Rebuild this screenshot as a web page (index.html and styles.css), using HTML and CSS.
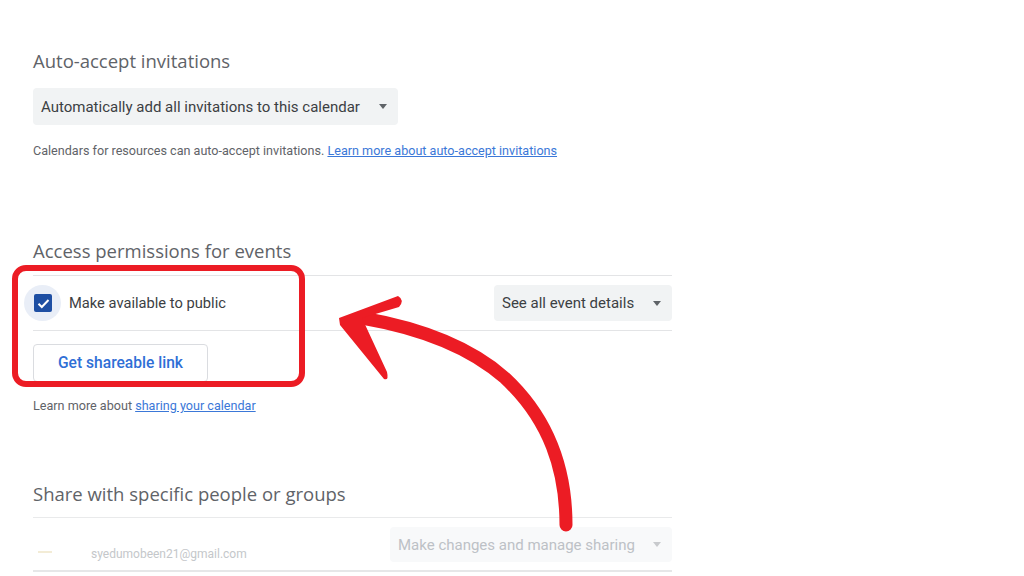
FILE: index.html
```html
<!DOCTYPE html>
<html lang="en">
<head>
    <meta name="viewport" content="width=device-width, initial-scale=1.0">
    <link rel="stylesheet" href="styles.css">
    <title>Calendar settings</title>
</head>

<body>
    <div id="page">

        <section class="block auto">
            <h2>Auto-accept invitations</h2>
            <div class="select wide">
                <span>Automatically add all invitations to this calendar</span>
                <span class="caret"></span>
            </div>
            <p class="help">Calendars for resources can auto-accept invitations. <a href="#">Learn more about auto-accept invitations</a></p>
        </section>

        <section class="block access">
            <h2>Access permissions for events</h2>
            <div class="row">
                <div class="check">
                    <span class="halo"></span>
                    <span class="box">
                        <svg width="13" height="11" viewBox="0 0 13 11"><path d="M1.5 5.8 L4.8 9 L11.5 2" fill="none" stroke="#fff" stroke-width="2"/></svg>
                    </span>
                </div>
                <span class="label">Make available to public</span>
                <div class="select small">
                    <span>See all event details</span>
                    <span class="caret"></span>
                </div>
            </div>
            <div class="btnrow">
                <button class="link-btn">Get shareable link</button>
            </div>
            <p class="help">Learn more about <a href="#">sharing your calendar</a></p>
        </section>

        <section class="block share">
            <h2>Share with specific people or groups</h2>
            <div class="row person">
                <span class="avatar"></span>
                <span class="email">syedumobeen21@gmail.com</span>
                <div class="select faded">
                    <span>Make changes and manage sharing</span>
                    <span class="caret"></span>
                </div>
            </div>
        </section>

        <!-- annotation drawn on top of the screenshot -->
        <svg class="annot" width="1024" height="576" viewBox="0 0 1024 576">
            <rect x="15" y="268" width="287" height="116" rx="11" fill="none" stroke="#ec1c24" stroke-width="6"/>
            <path d="M566 525 C 566 470, 550 420, 505 378 C 470 347, 420 328, 362 318" fill="none" stroke="#ec1c24" stroke-width="13" stroke-linecap="round"/>
            <path d="M339 318 L 398 296 Q 405 300 399 307 L 362 318 L 387 372 Q 389 381 384 379 L 340 325 Z" fill="#ec1c24"/>
        </svg>
    </div>
</body>
</html>
```

FILE: styles.css
```css
body {
    margin: 0px;
    background-color: white;
    font-family: Roboto, "Liberation Sans", sans-serif;
    color: #3c4043;
}

#page {
    position: relative;
    width: 1024px;
    height: 576px;
    overflow: hidden;
    padding: 0px 352px 0px 33px;
    box-sizing: border-box;
}

h2 {
    margin: 0px;
    font-family: "Open Sans", Roboto, sans-serif;
    font-weight: 400;
    font-size: 18.5px;
    line-height: 24px;
    color: #5f6368;
}

.block.auto {
    padding-top: 49px;
}

.block.auto h2 {
    margin-bottom: 15px;
}

.block.access {
    margin-top: 80px;
}

.block.access h2 {
    padding-bottom: 12px;
    border-bottom: 1px solid #e3e4e6;
}

.block.share {
    margin-top: 68px;
}

.block.share h2 {
    padding-bottom: 11px;
    border-bottom: 1px solid #e9eaeb;
}

.select {
    display: flex;
    align-items: center;
    justify-content: space-between;
    height: 37px;
    padding: 0px 11px 0px 8px;
    background-color: #f1f3f4;
    border-radius: 4px;
    font-size: 15px;
    color: #3c4043;
    box-sizing: border-box;
}

.select.wide {
    width: 365px;
}

.select.small {
    width: 178px;
    height: 36px;
    margin-left: auto;
}

.select.faded {
    width: 282px;
    height: 35px;
    margin-left: auto;
    background-color: #f8f9fa;
    color: #bdc1c6;
}

.caret {
    width: 0px;
    height: 0px;
    border-left: 4.5px solid transparent;
    border-right: 4.5px solid transparent;
    border-top: 5px solid #5f6368;
}

.select.faded .caret {
    border-top-color: #c8cacd;
}

.help {
    margin: 18px 0px 0px 0px;
    font-size: 12.6px;
    line-height: 16px;
    color: #5f6368;
}

.help a {
    color: #3b78d8;
}

.row {
    display: flex;
    align-items: center;
    height: 54px;
    border-bottom: 1px solid #e3e4e6;
}

.check {
    position: relative;
    width: 18px;
    height: 18px;
    margin-left: 1px;
}

.halo {
    position: absolute;
    left: -10px;
    top: -9px;
    width: 37px;
    height: 36px;
    border-radius: 50%;
    background-color: #e9eef7;
}

.box {
    position: absolute;
    left: 0px;
    top: 0px;
    width: 18px;
    height: 18px;
    border-radius: 2px;
    background-color: #1e4fa3;
    display: flex;
    align-items: center;
    justify-content: center;
}

.label {
    margin-left: 17px;
    font-size: 14.7px;
    color: #3c4043;
}

.btnrow {
    padding-top: 13px;
}

.link-btn {
    width: 175px;
    height: 38px;
    background-color: white;
    border: 1px solid #dadce0;
    border-radius: 4px;
    font-family: Roboto, "Liberation Sans", sans-serif;
    font-weight: 500;
    font-size: 15.6px;
    color: #2f6fd6;
}

.access .help {
    margin-top: 16px;
}

.row.person {
    align-items: flex-start;
    height: 52px;
    border-bottom: 2px solid #e6e7e8;
}

.row.person .select {
    margin-top: 9px;
}

.avatar {
    width: 14px;
    height: 2px;
    margin: 33px 0px 0px 5px;
    background-color: #f3ecd6;
}

.email {
    margin-left: 39px;
    margin-top: 28px;
    font-size: 12px;
    line-height: 16px;
    color: #c4c7ca;
}

.annot {
    position: absolute;
    left: 0px;
    top: 0px;
    pointer-events: none;
}
```
